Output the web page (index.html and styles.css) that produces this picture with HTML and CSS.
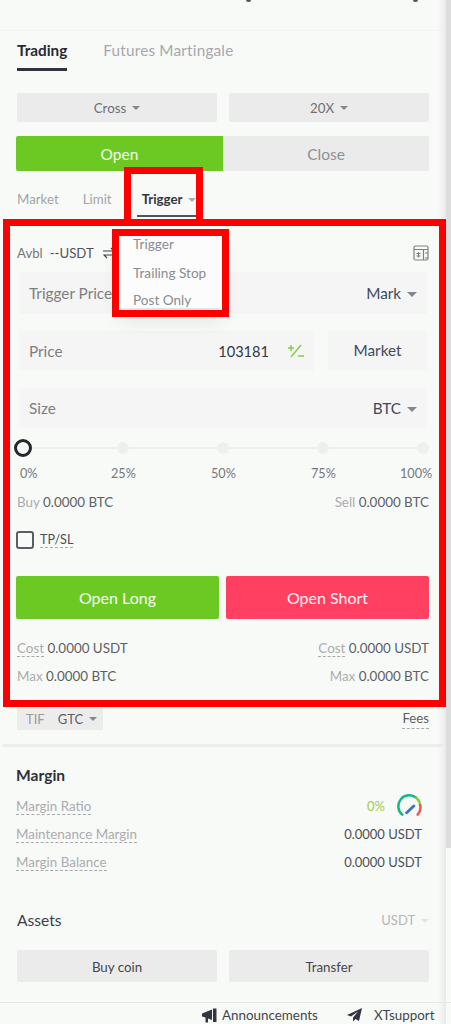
FILE: index.html
```html
<!DOCTYPE html>
<html lang="en">
<head>
<meta charset="utf-8">
<title>Trading</title>
<link rel="stylesheet" href="styles.css">
</head>
<body>
<div class="page">
  <div class="topbar"><i class="tail tail-a"></i><i class="tail tail-b"></i></div>
  <nav class="tabs">
    <span class="tab active">Trading</span>
    <span class="tab">Futures Martingale</span>
  </nav>
  <div class="two selects">
    <div class="btn-gray">Cross <i class="caret"></i></div>
    <div class="btn-gray">20X <i class="caret"></i></div>
  </div>
  <div class="side">
    <div class="side-open">Open</div>
    <div class="side-close">Close</div>
  </div>
  <div class="types">
    <span class="type market">Market</span>
    <span class="type limit">Limit</span>
    <span class="type trigger">Trigger <i class="caret"></i></span>
  </div>
  <div class="avbl">
    <span class="muted-dark">Avbl</span><span class="avbl-val">--USDT</span>
    <svg class="swap" width="12" height="12" viewBox="0 0 12 12" fill="none" stroke="#3c3f4a" stroke-width="1.2"><path d="M0 4h11L8 1M12 8H1l3 3"/></svg>
    <svg class="cal" width="16" height="16" viewBox="0 0 16 16" fill="none" stroke="#808080" stroke-width="1.2"><rect x="1" y="1" width="14" height="14" rx="1.5"/><path d="M1 4.500h14M10.500 4.500V15M3.500 8.500h4M3.500 11h4M5.500 7v5.500M12 8h3M12 13h3"/></svg>
  </div>
  <div class="field f-trigger">
    <span class="f-label">Trigger Price</span>
    <span class="f-val">Mark <i class="caret big"></i></span>
  </div>
  <div class="price-row">
    <div class="field f-price">
      <span class="f-label">Price</span>
      <span class="f-num">103181
        <svg class="pm" width="16" height="14" viewBox="0 0 16 14" fill="none" stroke="#7ed04a" stroke-width="1.5"><path d="M0 4h6M3 1v6M13 1L3 13M10 12h6"/></svg>
      </span>
    </div>
    <div class="field f-market">Market</div>
  </div>
  <div class="field f-size">
    <span class="f-label">Size</span>
    <span class="f-val">BTC <i class="caret big"></i></span>
  </div>
  <div class="slider">
    <span class="stop"><i class="thumb"></i></span>
    <span class="stop"><i class="dot"></i></span>
    <span class="stop"><i class="dot"></i></span>
    <span class="stop"><i class="dot"></i></span>
    <span class="stop"><i class="dot"></i></span>
  </div>
  <div class="pcts"><span>0%</span><span>25%</span><span>50%</span><span>75%</span><span>100%</span></div>
  <div class="kv buysell">
    <span><span class="lab">Buy</span> 0.0000 BTC</span>
    <span><span class="lab">Sell</span> 0.0000 BTC</span>
  </div>
  <div class="tpsl"><i class="check"></i><span class="tp dashed">TP/SL</span></div>
  <div class="actions">
    <div class="act long">Open Long</div>
    <div class="act short">Open Short</div>
  </div>
  <div class="kv cost">
    <span><span class="lab dashed">Cost</span> 0.0000 USDT</span>
    <span><span class="lab dashed">Cost</span> 0.0000 USDT</span>
  </div>
  <div class="kv max">
    <span><span class="lab">Max</span> 0.0000 BTC</span>
    <span><span class="lab">Max</span> 0.0000 BTC</span>
  </div>
  <div class="tif-row">
    <div class="tif"><span class="tif-l">TIF</span><span class="tif-v">GTC</span><i class="caret"></i></div>
    <span class="fees dashed">Fees</span>
  </div>
  <div class="divider"></div>
  <h2 class="h-margin">Margin</h2>
  <div class="mrow mr1"><span class="lab dashed">Margin Ratio</span>
    <span class="ratio"><span class="pct0">0%</span>
      <svg width="25" height="24" viewBox="0 0 26 24" fill="none" stroke-width="2.600" stroke-linecap="round"><path d="M5.500 21A11 11 0 0 1 20 3.500" stroke="#12b886"/><path d="M20 3.500A11 11 0 0 1 24 11" stroke="#8ecb3f"/><path d="M24 11A11 11 0 0 1 21.500 21" stroke="#f0525f"/><path d="M10 19L17.500 12" stroke="#3f72c4" stroke-width="3"/></svg>
    </span>
  </div>
  <div class="mrow mr2"><span class="lab dashed">Maintenance Margin</span><span>0.0000 USDT</span></div>
  <div class="mrow mr2"><span class="lab dashed">Margin Balance</span><span>0.0000 USDT</span></div>
  <div class="assets"><span class="a-title">Assets</span><span class="a-cur">USDT <i class="caret pale"></i></span></div>
  <div class="two bottom">
    <div class="btn-gray dark">Buy coin</div>
    <div class="btn-gray dark">Transfer</div>
  </div>
  <footer class="foot">
    <svg width="15" height="15" viewBox="0 0 15 15" fill="#33363f"><path d="M0 5.500L10 1.500V12L6 10.500V14.500H3.500V9.500L0 8.500ZM11 0.500H14.500V14H11Z"/></svg>
    <span class="foot-a">Announcements</span>
    <svg class="plane" width="15" height="14" viewBox="0 0 15 14" fill="#33363f"><path d="M15 0L0 7l4 1.500L11 3.500 6 9.500v4l2.500-2.500 3.500 2Z"/></svg>
    <span class="foot-x">XTsupport</span>
  </footer>

  <div class="shade"></div>
  <div class="menu">
    <span class="m1">Trigger</span>
    <span class="m2">Trailing Stop</span>
    <span>Post Only</span>
  </div>
  <div class="mark mark-big"></div>
  <div class="mark mark-tab"></div>
  <div class="mark mark-menu"></div>
  <div class="scroll"></div>
</div>
</body>
</html>
```
FILE: styles.css
```css
* { box-sizing: border-box; }
html, body { margin: 0; padding: 0; }
body { background: #f8faf8; font-family: "Lato", "Noto Sans", sans-serif; font-size: 13.4px; color: #4d4f55; }
i { font-style: normal; display: inline-block; }
.page { position: relative; width: 451px; height: 1024px; overflow: hidden; padding: 0 22px 0 16px; }

.caret { width: 0; height: 0; border-left: 4px solid transparent; border-right: 4px solid transparent; border-top: 4px solid #85878c; vertical-align: 2px; margin-left: 3px; }
.caret.big { border-left-width: 5px; border-right-width: 5px; border-top-width: 5px; vertical-align: 2px; }
.caret.pale { border-top-color: #e2e3e2; }
.dashed { border-bottom: 1px dashed #a9a9a9; }

.topbar { position: relative; height: 31px; margin: 0 -22px 0 -16px; border-bottom: 1px dotted #eceeec; }
.tail { position: absolute; top: 0; width: 5px; height: 2px; border-radius: 0 0 3px 3px; background: #55575d; }
.tail-a { left: 246px; }
.tail-b { left: 413px; }

.tabs { display: flex; gap: 36px; height: 40px; }
.tab { padding-top: 9px; line-height: 20px; font-size: 15.3px; color: #a6a8ac; letter-spacing: .2px; height: 40px; }
.tab.active { margin-left: 1px; color: #272a33; font-weight: 700; border-bottom: 3px solid #30333c; letter-spacing: 0; }

.two { display: grid; grid-template-columns: 200px 200px; gap: 12px; margin-left: 1px; }
.btn-gray { background: #ebebeb; display: flex; align-items: center; justify-content: center; gap: 3px; border-radius: 2px; color: #6e7075; font-size: 13.3px; }
.btn-gray.dark { color: #45474e; padding-top: 1px; }
.selects { margin-top: 22px; height: 29px; }

.side { display: grid; grid-template-columns: 207px 206px; margin-top: 14px; height: 35px; font-size: 15.5px; }
.side-open { background: #6cc924; color: #f4fdf0; border-radius: 2px 0 0 2px; display: flex; align-items: center; justify-content: center; }
.side-close { background: #ebebeb; color: #8f9094; border-radius: 0 2px 2px 0; display: flex; align-items: center; justify-content: center; }

.types { display: flex; height: 46px; padding-top: 18px; line-height: 20px; font-size: 13.3px; color: #a2a4a8; }
.type.market { margin-left: 1px; }
.type.limit { margin-left: 24px; }
.type.trigger { margin-left: 25px; padding: 0 0 8px 5px; width: 60px; height: 28px; white-space: nowrap; color: #33363f; font-weight: 700; border-bottom: 2px solid #50535b; }
.type.trigger .caret { border-top-color: #aaa; margin-left: 2px; }

.avbl { position: relative; display: flex; align-items: center; margin: 26px 0 0 1px; height: 20px; font-size: 13.2px; color: #50535c; }
.muted-dark { color: #74767b; }
.avbl-val { margin-left: 7px; }
.swap { margin-left: 9px; }
.cal { margin-left: auto; margin-right: 0; }

.field { background: #f4f5f4; display: flex; align-items: center; justify-content: space-between; padding: 0 10px; border-radius: 2px; font-size: 15.3px; color: #3f4a5c; }
.f-label { color: #7d7f83; }
.f-trigger { margin: 9px 2px 0 3px; height: 42px; padding-right: 10px; }
.f-size { margin: 17px 2px 0 3px; height: 40px; padding-right: 10px; }
.f-val .caret { margin-left: 2px; }
.price-row { display: flex; gap: 14px; margin: 17px 2px 0 3px; height: 40px; }
.f-price { width: 295px; }
.f-num { display: flex; align-items: center; gap: 19px; color: #35383f; font-size: 14.6px; padding-right: 0; }
.f-market { width: 99px; justify-content: center; padding: 0 0 2px; color: #3f4a5c; }

.slider { position: relative; display: flex; justify-content: space-between; align-items: center; margin: 10px -3px 0 -2px; height: 20px; }
.slider::before { content: ""; position: absolute; left: 18px; right: 4px; top: 9px; height: 2px; background: #eff0ee; }
.stop { position: relative; width: 18px; height: 18px; display: flex; align-items: center; justify-content: center; }
.thumb { width: 18px; height: 18px; border: 3px solid #25272e; border-radius: 50%; background: #f8faf8; }
.dot { width: 12px; height: 12px; border-radius: 50%; background: #eff0ee; }

.pcts { display: grid; grid-template-columns: 91px 100px 100px 89px auto; margin: 7px -3px 0 4px; height: 15px; line-height: 16px; font-size: 12.7px; color: #76787d; }

.kv { display: flex; justify-content: space-between; font-size: 13.4px; color: #5d5f65; line-height: 18px; }
.kv > span { white-space: nowrap; }
.lab { color: #aaacb0; }
.buysell { margin: 13px 0 0 1px; height: 19px; }

.tpsl { display: flex; align-items: center; gap: 6px; margin-top: 19px; height: 18px; }
.check { width: 18px; height: 18px; border: 2px solid #5b5d65; border-radius: 3px; }
.tp { font-size: 12.6px; color: #4c4e56; line-height: 15px; }

.actions { display: grid; grid-template-columns: 203px 203px; gap: 7px; margin-top: 27px; height: 43px; }
.act { display: flex; align-items: center; justify-content: center; border-radius: 2px; color: #f6fdf2; font-size: 16px; }
.long { background: #6cc924; }
.short { background: #ff4060; color: #fff0f2; }

.cost { margin: 20px 0 0 1px; height: 20px; }
.cost .lab { display: inline-block; line-height: 16px; }
.max { margin: 8px 0 0 1px; height: 18px; }

.tif-row { display: flex; justify-content: space-between; margin: 23px 0 0 1px; height: 22px; }
.tif { width: 86px; background: #ececec; display: flex; align-items: center; padding-left: 9px; font-size: 13px; color: #5d5f65; }
.tif-l { color: #9a9ca0; margin-right: 13px; }
.tif .caret { margin-left: 6px; }
.fees { font-size: 13.2px; line-height: 18px; color: #5d5f65; height: 20px; margin-top: 1px; }

.divider { height: 3px; margin: 14px -14px 0 -13px; background: #ececec; }

.h-margin { margin: 18px 0 0; height: 20px; line-height: 20px; font-size: 15.6px; font-weight: 700; color: #2e3038; }

.mrow { display: flex; justify-content: space-between; align-items: center; height: 18px; margin-right: 7px; font-size: 13px; color: #4d4f55; }
.mrow .lab { line-height: 16px; font-size: 13.4px; }
.mr1 { margin-top: 12px; }
.mr2 { margin-top: 10px; }
.ratio { display: flex; align-items: center; gap: 12px; height: 18px; margin-right: 0; }
.pct0 { color: #a4c93f; }

.assets { display: flex; justify-content: space-between; align-items: center; margin: 39px 0 0 1px; height: 20px; font-size: 15.6px; color: #3d3f47; }
.a-cur { font-size: 13px; color: #b4b6b9; }
.a-cur .caret { margin-left: 3px; }
.bottom { margin-top: 20px; height: 32px; }

.foot { display: flex; align-items: center; margin: 20px -22px 0 -16px; height: 24px; padding: 1px 0 0 202px; border-top: 1px solid #e6e8e6; font-size: 13.4px; color: #43454d; }
.foot-a { margin-left: 5px; }
.plane { margin-left: 29px; }
.foot-x { margin-left: 12px; }

.shade { position: absolute; left: 438px; top: 0; width: 8px; height: 1024px; background: linear-gradient(to right, rgba(230, 230, 230, 0), #e9e9e9); }
.menu { position: absolute; left: 119px; top: 232px; width: 103px; height: 76px; background: #fbfcfb; box-shadow: 0 14px 18px rgba(0, 0, 0, .08); display: flex; flex-direction: column; padding: 3px 0 0 14px; font-size: 13.6px; color: #8a8c90; }
.menu span { flex: none; height: 27px; line-height: 18px; }
.menu .m1 { height: 29px; }

.mark { position: absolute; border: 7px solid #f00; }
.mark-big { left: 3px; top: 219px; width: 443px; height: 488px; }
.mark-tab { left: 124px; top: 167px; width: 79px; height: 59px; border-bottom: 0; }
.mark-menu { left: 112px; top: 229px; width: 117px; height: 88px; }

.scroll { position: absolute; right: 0; top: 0; width: 5px; height: 848px; background: #dcdddc; }
```
